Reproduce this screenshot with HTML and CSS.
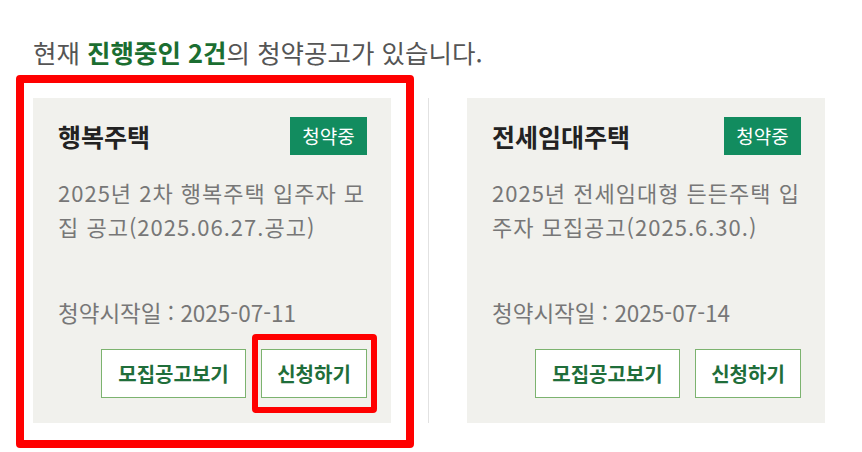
FILE: index.html
```html
<!DOCTYPE html>
<html lang="ko">
<head>
<meta charset="UTF-8">
<meta name="viewport" content="width=device-width, initial-scale=1.0">
<title>청약공고</title>
<link rel="stylesheet" href="styles.css">
</head>
<body>
    <div class="notice">
        <p class="summary">현재 <strong>진행중인 2건</strong>의 청약공고가 있습니다.</p>
        <ul class="apply-list">
            <li class="apply-item is-marked">
                <div class="card">
                    <div class="card-head">
                        <h3>행복주택</h3>
                        <span class="badge">청약중</span>
                    </div>
                    <p class="desc">2025년 2차 행복주택 입주자 모집 공고(2025.06.27.공고)</p>
                    <p class="date">청약시작일 : 2025-07-11</p>
                    <div class="btns">
                        <a href="#" class="btn btn-view">모집공고보기</a>
                        <a href="#" class="btn btn-apply is-marked">신청하기</a>
                    </div>
                </div>
            </li>
            <li class="apply-item">
                <div class="card">
                    <div class="card-head">
                        <h3>전세임대주택</h3>
                        <span class="badge">청약중</span>
                    </div>
                    <p class="desc">2025년 전세임대형 든든주택 입주자 모집공고(2025.6.30.)</p>
                    <p class="date">청약시작일 : 2025-07-14</p>
                    <div class="btns">
                        <a href="#" class="btn btn-view">모집공고보기</a>
                        <a href="#" class="btn btn-apply">신청하기</a>
                    </div>
                </div>
            </li>
        </ul>
    </div>
</body>
</html>
```

FILE: styles.css
```css
body, html {
    margin: 0;
    padding: 0;
    background-color: #fff;
}
body {
    font-family: 'Noto Sans CJK KR', 'Noto Sans', sans-serif;
    color: #555;
}
.notice {
    padding: 37px 0 29px 33px;
}
.summary {
    margin: 0;
    font-size: 25.5px;
    line-height: 30px;
    color: #555;
}
.summary strong {
    color: #1b6e31;
}
.apply-list {
    display: flex;
    list-style: none;
    margin: 31px 0 0;
    padding: 0;
}
.apply-item {
    position: relative;
    padding: 0 37px 0 38px;
    border-right: 1px solid #e2e2e2;
}
.apply-item:first-child {
    padding-left: 0;
}
/* 강조 표시 */
.apply-item.is-marked::after {
    content: '';
    position: absolute;
    left: -17px;
    top: -23px;
    right: 14px;
    bottom: -25px;
    border: 8px solid #f00;
    border-radius: 4px;
    pointer-events: none;
}
.card {
    box-sizing: border-box;
    width: 358px;
    padding: 19px 24px 25px 25px;
    background-color: #f1f1ed;
}
.card-head {
    display: flex;
    justify-content: space-between;
    align-items: center;
}
.card-head h3 {
    margin: 0;
    font-size: 25px;
    font-weight: bold;
    color: #222;
}
.badge {
    display: inline-block;
    width: 77px;
    height: 38px;
    line-height: 38px;
    text-align: center;
    font-size: 19px;
    color: #fff;
    background-color: #128c5f;
}
.desc {
    margin: 20px 0 0;
    min-height: 102px;
    font-size: 22px;
    letter-spacing: 1px;
    line-height: 34px;
    color: #777;
}
.date {
    margin: 18px 0 0;
    font-size: 22.5px;
    line-height: 34px;
    color: #777;
}
.btns {
    display: flex;
    justify-content: flex-end;
    gap: 15px;
    margin-top: 20px;
}
.btn {
    position: relative;
    display: inline-block;
    box-sizing: border-box;
    height: 49px;
    line-height: 47px;
    padding: 0;
    text-align: center;
    border: 1px solid #7cb36f;
    background-color: #fff;
    color: #1f6e3a;
    font-size: 20px;
    font-weight: bold;
    text-decoration: none;
    white-space: nowrap;
}
.btn-view {
    width: 145px;
}
.btn-apply {
    width: 106px;
}
.btn.is-marked::after {
    content: '';
    position: absolute;
    left: -10px;
    top: -16px;
    right: -11px;
    bottom: -16px;
    border: 6px solid #f00;
    border-radius: 4px;
}
```
